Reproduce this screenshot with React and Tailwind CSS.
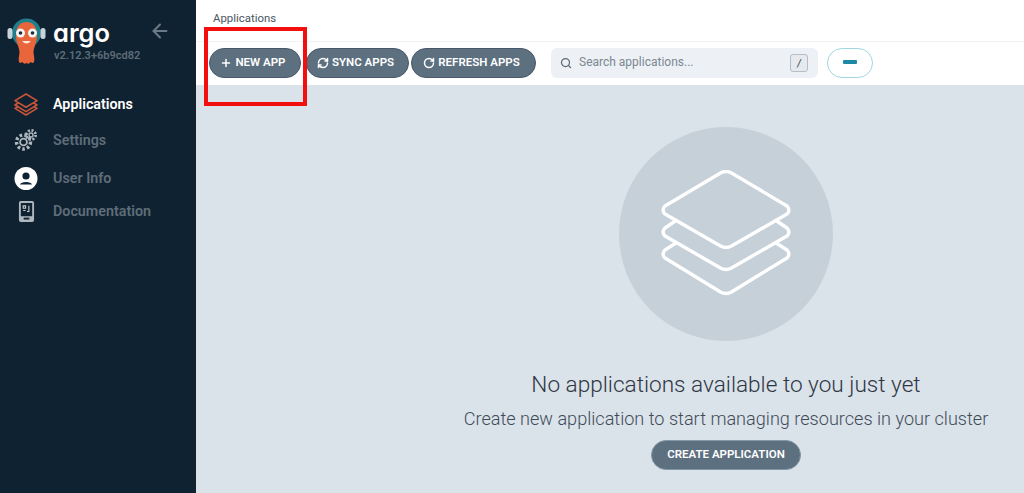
import React from "react"
import { ArrowLeft, Plus, RefreshCw, RotateCw, Search } from "lucide-react"

const ArgoLogo = () => (
	<svg width="40" height="50" viewBox="0 0 40 50" className="shrink-0">
		<circle cx="19.5" cy="17" r="14.5" fill="#1f7f8c" />
		<rect x="0.5" y="12" width="5" height="11" rx="2.5" fill="#c9d3da" />
		<rect x="33.5" y="12" width="5" height="11" rx="2.5" fill="#c9d3da" />
		<path d="M9 20 C9 9 14 6 19.5 6 C25 6 30 9 30 20 C30 27 27 30 26.5 36 C26.5 39 28 42 27 46 C25.5 48 24.5 46 23.5 46 C22.5 48 21 48 19.5 47 C18 48 16.5 48 15.5 46 C14.5 46 13.5 48 12 46 C11 42 12.5 39 12.5 36 C12 30 9 27 9 20 Z" fill="#e9653b" />
		<circle cx="13.5" cy="17" r="4.5" fill="#f5f5f5" />
		<circle cx="25.5" cy="17" r="4.5" fill="#f5f5f5" />
		<circle cx="13.5" cy="17" r="1.8" fill="#1b2a36" />
		<circle cx="25.5" cy="17" r="1.8" fill="#1b2a36" />
		<path d="M15 25 Q19.5 30 24 25 Z" fill="#f7e8df" />
	</svg>
)

const StackIcon = ({ color }) => (
	<svg width="24" height="24" viewBox="0 0 24 24" fill="none" stroke={color} strokeWidth="1.6" strokeLinejoin="round">
		<path d="M12 2 L23 8.6 L12 15.2 L1 8.6 Z" />
		<path d="M4.6 10.8 L1 13 L12 19.6 L23 13 L19.4 10.8" />
		<path d="M4.6 15.2 L1 17.4 L12 24 L23 17.4 L19.4 15.2" transform="translate(0 -1)" />
	</svg>
)

const GearsIcon = () => (
	<svg width="24" height="24" viewBox="0 0 24 24" fill="none" stroke="#aeb7be" strokeLinecap="butt">
		<circle cx="9.5" cy="14" r="3.4" strokeWidth="1.8" />
		<circle cx="9.5" cy="14" r="7" strokeWidth="3.4" strokeDasharray="2.6 2.2" />
		<circle cx="17" cy="7" r="2" strokeWidth="1.4" />
		<circle cx="17" cy="7" r="4.6" strokeWidth="2.8" strokeDasharray="2 1.6" />
	</svg>
)

const UserIcon = () => (
	<svg width="25" height="25" viewBox="0 0 24 24">
		<circle cx="12" cy="12" r="11.5" fill="#ffffff" />
		<circle cx="12" cy="9.5" r="3.6" fill="#0f2231" />
		<path d="M6 18 C6.5 14.5 17.5 14.5 18 18 Z" fill="#0f2231" />
	</svg>
)

const DocsIcon = () => (
	<svg width="17" height="23" viewBox="0 0 18 24" fill="none">
		<rect x="1" y="1" width="16" height="22" rx="2" fill="#aeb7be" />
		<rect x="3" y="3" width="12" height="14" fill="#0f2231" />
		<path d="M5.5 6 H8 V8.5 H5.5 Z M5.5 11 H8 M11.5 6 V12 H9.5" stroke="#c5ccd1" strokeWidth="1.2" />
		<rect x="6" y="18.5" width="6" height="2" fill="#0f2231" />
	</svg>
)

const navItems = [
	{ label: "Applications", icon: <StackIcon color="#c8553a" />, active: true, row: "mt-[26px] h-[24px]" },
	{ label: "Settings", icon: <GearsIcon />, row: "mt-[12px] h-[24px]" },
	{ label: "User Info", icon: <UserIcon />, row: "mt-[14px] h-[24px]" },
	{ label: "Documentation", icon: <DocsIcon />, row: "mt-[9px] h-[24px]" },
]

const Sidebar = () => (
	<aside className="w-[196px] shrink-0 bg-[#0f2231] border-r border-[#1a1f24]">
		<div className="flex pl-[7px] pt-[16px]">
			<ArgoLogo />
			<div className="ml-[7px] w-[66px]">
				<div className="font-['Inter',sans-serif] [font-feature-settings:'cv11'] text-[25.5px] leading-[26px] font-semibold text-white mt-[4px] -ml-[1px]">argo</div>
				<div className="text-[11px] leading-[12px] font-semibold text-[#5f6d78] mt-[4px] whitespace-nowrap">v2.12.3+6b9cd82</div>
			</div>
			<ArrowLeft size={22} strokeWidth={2.2} className="text-[#6b7a85] ml-[29px] mt-[4px]" />
		</div>
		<nav>
			{navItems.map((item) => (
				<div key={item.label} className={`flex items-center ${item.row}`}>
					<div className="w-[24px] flex justify-center ml-[14px] shrink-0">{item.icon}</div>
					<span className={`ml-[15px] pt-[2px] text-[14.3px] font-semibold ${item.active ? "text-white" : "text-[#5f6d78]"}`}>
						{item.label}
					</span>
				</div>
			))}
		</nav>
	</aside>
)

const ToolButton = ({ icon, children, className }) => (
	<button className={`h-[30px] rounded-full bg-[#5d7080] border border-[#47586a] flex items-center justify-center gap-[3px] pb-[1px] pr-[4px] text-white text-[11.5px] font-semibold ${className}`}>
		{icon}
		{children}
	</button>
)

const Toolbar = () => (
	<div className="h-[44px] bg-white border-t border-[#f1f3f5] flex items-center pl-[13px] pb-[1px]">
		<ToolButton icon={<Plus size={12} strokeWidth={3} />} className="w-[92px]">NEW APP</ToolButton>
		<ToolButton icon={<RefreshCw size={12} strokeWidth={3} />} className="w-[103px] ml-[5px]">SYNC APPS</ToolButton>
		<ToolButton icon={<RotateCw size={12} strokeWidth={3} />} className="w-[125px] ml-[2px]">REFRESH APPS</ToolButton>
		<div className="h-[30px] w-[267px] ml-[15px] rounded-md bg-[#edf0f4] flex items-center pl-[9px] pr-[10px]">
			<Search size={12} strokeWidth={2.5} className="text-[#5d6b76]" />
			<span className="ml-[7px] pb-[3px] text-[12px] text-[#7b8893] flex-1">Search applications...</span>
			<span className="w-[18px] h-[18px] rounded-[3px] border border-[#b5bec6] bg-[#e6eaee] flex items-center justify-center text-[10px] italic font-semibold text-[#4c5862]">/</span>
		</div>
		<div className="h-[30px] w-[46px] ml-[9px] pb-[2px] rounded-full bg-white border border-[#9fd6e2] flex items-center justify-center">
			<div className="w-[14px] h-[4px] rounded-[1px] bg-[#1d8aa5]" />
		</div>
	</div>
)

const EmptyState = () => (
	<div className="flex-1 bg-[#dae2ea] pl-[232px] flex flex-col items-center pt-[42px]">
		<div className="w-[214px] h-[214px] rounded-full bg-[#c5d0d9] flex items-center justify-center shrink-0">
			<svg width="132" height="128" viewBox="0 0 132 128" fill="none" stroke="#ffffff" strokeWidth="3.4" strokeLinejoin="round" strokeLinecap="round">
				<path d="M60.5 3 Q66 0 71.5 3 L127 36 Q131 40 127 44 L71.5 76 Q66 79 60.5 76 L5 44 Q1 40 5 36 Z" />
				<path d="M16 50.5 L5 58 Q1 62 5 66 L60.5 98 Q66 101 71.5 98 L127 66 Q131 62 127 58 L116 50.5" />
				<path d="M16 73 L5 80 Q1 84 5 88 L60.5 122 Q66 125 71.5 122 L127 88 Q131 84 127 80 L116 73" />
			</svg>
		</div>
		<h1 className="mt-[30px] text-[22.6px] leading-[28px] font-light text-[#2f3643] whitespace-nowrap">No applications available to you just yet</h1>
		<p className="mt-[9px] text-[18.1px] leading-[22px] font-light text-[#3f4c58] whitespace-nowrap">Create new application to start managing resources in your cluster</p>
		<button className="mt-[10px] w-[150px] h-[30px] rounded-full bg-[#5d7080] border border-[#8497a6] text-white text-[11.5px] font-semibold">CREATE APPLICATION</button>
	</div>
)

const App = () => (
	<div className="relative flex h-[493px] w-[1024px] overflow-hidden bg-white font-['Roboto',sans-serif]">
		<Sidebar />
		<main className="flex-1 flex flex-col min-w-0">
			<div className="h-[41px] bg-white pl-[17px] pt-[11px] text-[11.4px] leading-[14px] text-[#4a5560]">Applications</div>
			<Toolbar />
			<EmptyState />
		</main>
		{/* red annotation */}
		<div className="absolute left-[204px] top-[27px] w-[103px] h-[79px] border-[4px] border-[#f40f0f]" />
	</div>
)

export default App
